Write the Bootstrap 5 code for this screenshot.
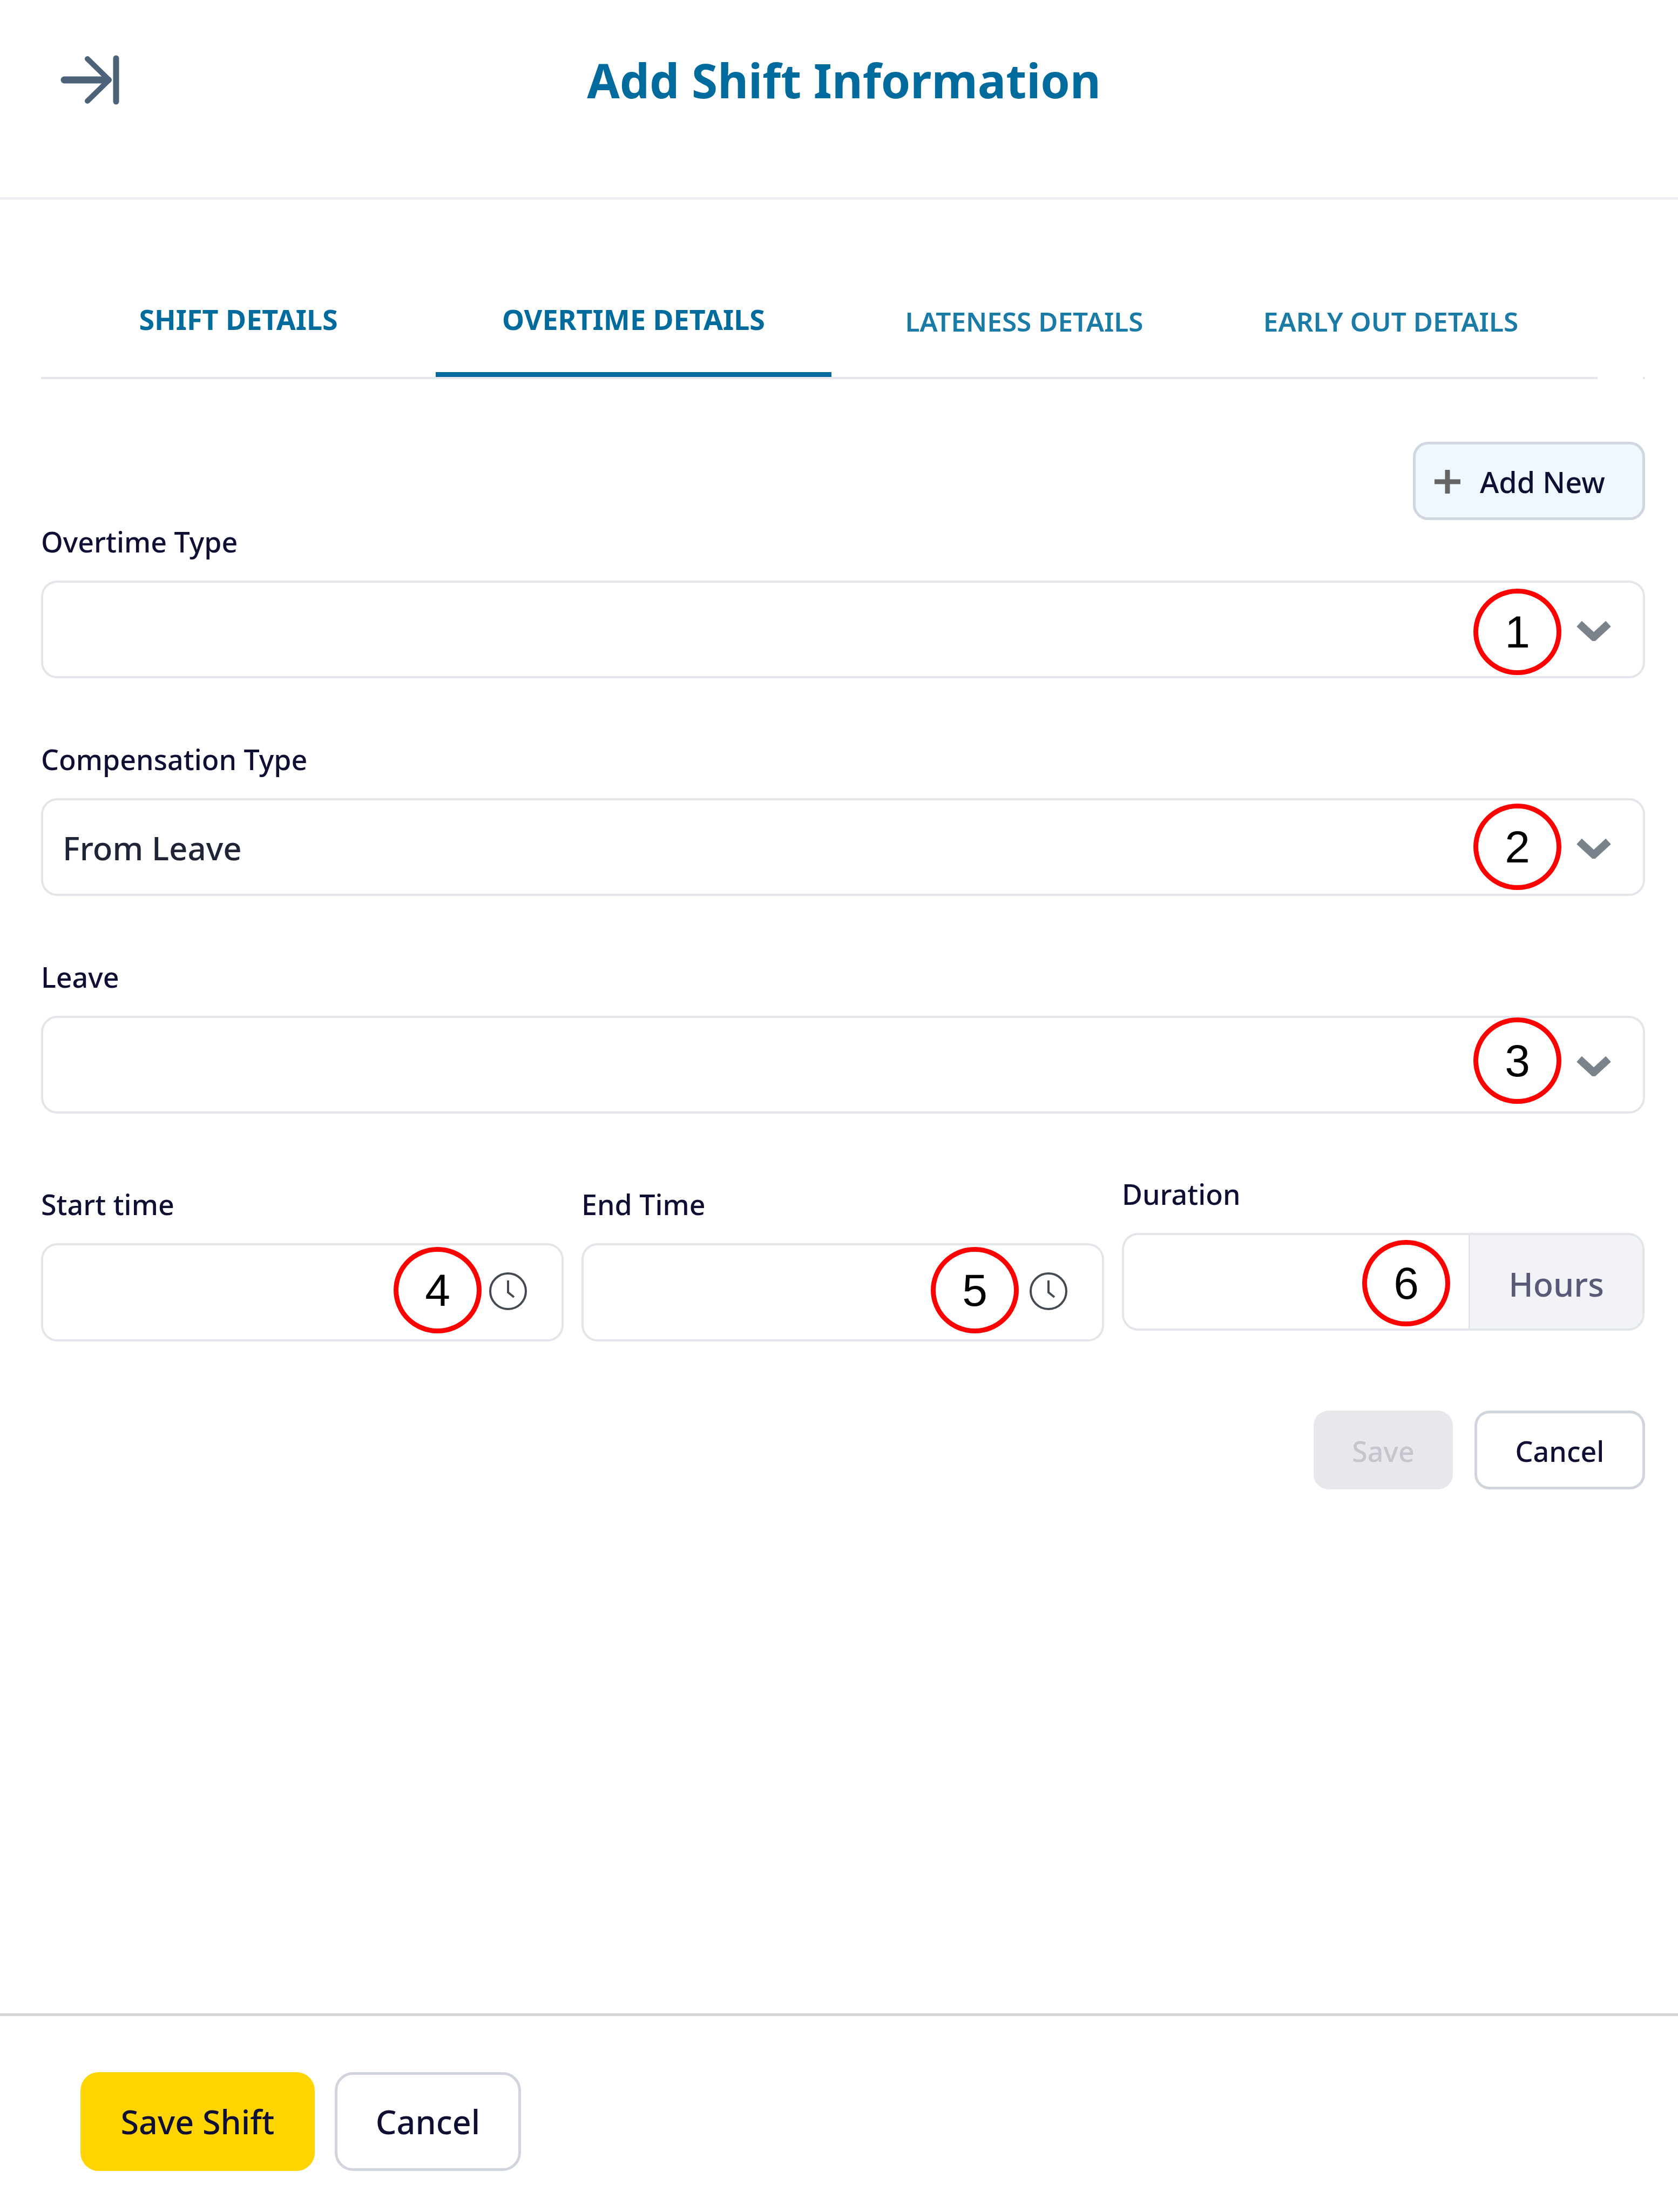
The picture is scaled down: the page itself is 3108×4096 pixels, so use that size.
<!DOCTYPE html>
<html lang="en">
<head>
<meta charset="utf-8">
<title>Add Shift Information</title>
<link href="https://cdn.jsdelivr.net/npm/bootstrap@5.3.0/dist/css/bootstrap.min.css" rel="stylesheet">
<style>
body{font-family:"Noto Sans","Open Sans",sans-serif;background:#fff;color:#0f0f33}
.pg{width:3108px;height:4096px;overflow:hidden}
.hdr{height:370px;border-bottom:5px solid #eceff3}
.hdr-icon{position:absolute;left:112px;top:102px}
.hdr-title{font-size:87.5px;line-height:120px;font-weight:700;color:#006b9c;margin:0;padding:88px 0 0 18px;text-align:center}
.tab-wrap{margin-top:170px;padding-left:76px;padding-right:61px}
.tab-bar{width:2883px;height:162px;border-bottom:4px solid #e4e7ec}
.tab-x{box-sizing:border-box;height:158px;padding-top:28px;font-size:52px;line-height:46px;font-weight:700;color:#006b9c;text-align:center;text-decoration:none;text-transform:uppercase}
.tab-w1{width:731px}.tab-w2{width:733px;border-bottom:9px solid #006b9c}
.tab-w3{width:714px;padding-top:32px;font-size:49.5px;font-weight:600;color:#1a7ca6}.tab-w4{width:644px;padding-top:32px;font-size:49.5px;font-weight:600;color:#1a7ca6}
.speck{width:4px;height:4px;background:#e4e7ec}
.frm{padding-left:76px;padding-right:61px}
.add-btn{width:430px;height:145px;margin-top:116px;padding:3px 0 0 35px;border:5px solid #d0d7e0;border-radius:28px;background:#f0f8ff;color:#0f0f33;font-size:54px;font-weight:500;gap:36px}
.add-btn:hover{background:#f0f8ff;color:#0f0f33}
.lbl{display:block;height:60px;line-height:60px;margin:0 0 42px;font-size:52px;font-weight:500;color:#0f0f33}
.first{margin-top:10px}
.field{height:181px;margin-bottom:120px}
.ctl{height:100%;border:4.5px solid #e2e6ea;border-radius:30px;font-size:60px;font-weight:500;color:#1f2437;padding:3px 36px 0;background:#fff;box-shadow:none}
select.ctl{background-image:none;padding-right:36px}
.chev{position:absolute;right:63px;top:74px}
.mark-c{position:absolute;width:163px;height:160px;border:9px solid #f00;border-radius:50%;font-family:"Liberation Sans",Arial,sans-serif;font-size:84px;line-height:1;color:#000;background:transparent}
.m1{right:155px;top:15px}.m2{right:155px;top:10px}.m3{right:155px;top:3px}
.m4{left:653px;top:7px}.m5{left:647px;top:7px}.m6{left:445px;top:13px}
.tcols{margin-top:-120px;padding-top:138px;gap:33px}
.tcol{width:968px}
.tcol-d{margin-top:-19px}
.tfield{height:182px;margin:0}
.clk{position:absolute;left:829px;top:53px}
.dfield{height:181px}
.dgroup{height:100%}
.dinput{border-right:0;border-radius:30px 0 0 30px!important}
.hrs{width:327px;justify-content:center;background:#f2f3f6;border:4.5px solid #e2e6ea;border-radius:0 30px 30px 0!important;font-size:61px;font-weight:500;color:#5a5a78;padding:8px 0 0}
.acts{margin-top:128px;gap:40px}
.b-save{width:258px;height:146px;padding:3px 0 0;border:0;border-radius:28px;background:#e6e8ec;color:#c4c5ce;font-size:52px;font-weight:500;opacity:1}
.b-save:disabled{background:#e6e8ec;color:#c4c5ce;opacity:1}
.b-can{width:316px;height:146px;padding:3px 0 0;border:5px solid #d0d5dd;border-radius:28px;background:#fff;color:#0f0f33;font-size:52px;font-weight:500}
.ftr{border-top:5px solid #d4d4d4;padding:104px 0 76px 149px;gap:37px}
.f-save{width:434px;height:183px;padding:0;border:0;border-radius:34px;background:#ffd400;color:#0f0f33;font-size:61px;font-weight:500}
.f-can{width:345px;height:183px;padding:0;border:5px solid #d0d5dd;border-radius:34px;background:#fff;color:#0f0f33;font-size:61px;font-weight:500}
</style>
</head>
<body>
<div class="pg d-flex flex-column">
  <header class="hdr position-relative">
    <svg class="hdr-icon" width="112" height="92" viewBox="0 0 112 92" fill="none" stroke="#4b6278" stroke-linecap="round" stroke-linejoin="round">
      <path d="M7 46H88" stroke-width="13"/>
      <path d="M50 7L90 46L50 85" stroke-width="10"/>
      <path d="M103 6V86" stroke-width="11"/>
    </svg>
    <h1 class="hdr-title">Add Shift Information</h1>
  </header>

  <nav class="tab-wrap d-flex">
    <div class="tab-bar d-flex">
      <a class="tab-x tab-w1" href="#">Shift Details</a>
      <a class="tab-x tab-w2" href="#">Overtime Details</a>
      <a class="tab-x tab-w3" href="#">Lateness Details</a>
      <a class="tab-x tab-w4" href="#">Early Out Details</a>
    </div>
    <div class="flex-grow-1 d-flex justify-content-end align-items-end"><span class="speck"></span></div>
  </nav>

  <main class="frm">
    <div class="d-flex justify-content-end">
      <button type="button" class="btn add-btn d-flex align-items-center">
        <svg width="48" height="44" viewBox="0 0 48 44" fill="none" stroke="#666" stroke-width="9"><path d="M24 0V44M0 22H48"/></svg>
        <span>Add New</span>
      </button>
    </div>

    <label class="lbl first">Overtime Type</label>
    <div class="field position-relative">
      <select class="form-select ctl"><option></option></select>
      <div class="mark-c m1 d-flex align-items-center justify-content-center">1</div>
      <svg class="chev" width="64" height="38" viewBox="0 0 64 38" fill="none" stroke="#7a838c" stroke-width="14"><path d="M5 6L32 31L59 6"/></svg>
    </div>

    <label class="lbl">Compensation Type</label>
    <div class="field position-relative">
      <select class="form-select ctl"><option>From Leave</option></select>
      <div class="mark-c m2 d-flex align-items-center justify-content-center">2</div>
      <svg class="chev" width="64" height="38" viewBox="0 0 64 38" fill="none" stroke="#7a838c" stroke-width="14"><path d="M5 6L32 31L59 6"/></svg>
    </div>

    <label class="lbl">Leave</label>
    <div class="field position-relative">
      <select class="form-select ctl"><option></option></select>
      <div class="mark-c m3 d-flex align-items-center justify-content-center">3</div>
      <svg class="chev" width="64" height="38" viewBox="0 0 64 38" fill="none" stroke="#7a838c" stroke-width="14"><path d="M5 6L32 31L59 6"/></svg>
    </div>

    <div class="tcols d-flex align-items-start">
      <div class="tcol">
        <label class="lbl">Start time</label>
        <div class="tfield position-relative">
          <input class="form-control ctl" type="text">
          <div class="mark-c m4 d-flex align-items-center justify-content-center">4</div>
          <svg class="clk" width="72" height="72" viewBox="0 0 72 72" fill="none" stroke="#444a52" stroke-width="4"><circle cx="36" cy="36" r="33"/><path d="M36 16V38L47 47"/></svg>
        </div>
      </div>
      <div class="tcol">
        <label class="lbl">End Time</label>
        <div class="tfield position-relative">
          <input class="form-control ctl" type="text">
          <div class="mark-c m5 d-flex align-items-center justify-content-center">5</div>
          <svg class="clk" width="72" height="72" viewBox="0 0 72 72" fill="none" stroke="#444a52" stroke-width="4"><circle cx="36" cy="36" r="33"/><path d="M36 16V38L47 47"/></svg>
        </div>
      </div>
      <div class="tcol tcol-d">
        <label class="lbl">Duration</label>
        <div class="dfield position-relative">
          <div class="input-group dgroup">
            <input class="form-control ctl dinput" type="text">
            <span class="input-group-text hrs">Hours</span>
          </div>
          <div class="mark-c m6 d-flex align-items-center justify-content-center">6</div>
        </div>
      </div>
    </div>

    <div class="acts d-flex justify-content-end">
      <button type="button" class="btn b-save" disabled>Save</button>
      <button type="button" class="btn b-can">Cancel</button>
    </div>
  </main>

  <footer class="ftr mt-auto d-flex">
    <button type="button" class="btn f-save">Save Shift</button>
    <button type="button" class="btn f-can">Cancel</button>
  </footer>
</div>
<script src="https://cdn.jsdelivr.net/npm/bootstrap@5.3.0/dist/js/bootstrap.bundle.min.js"></script>
</body>
</html>
